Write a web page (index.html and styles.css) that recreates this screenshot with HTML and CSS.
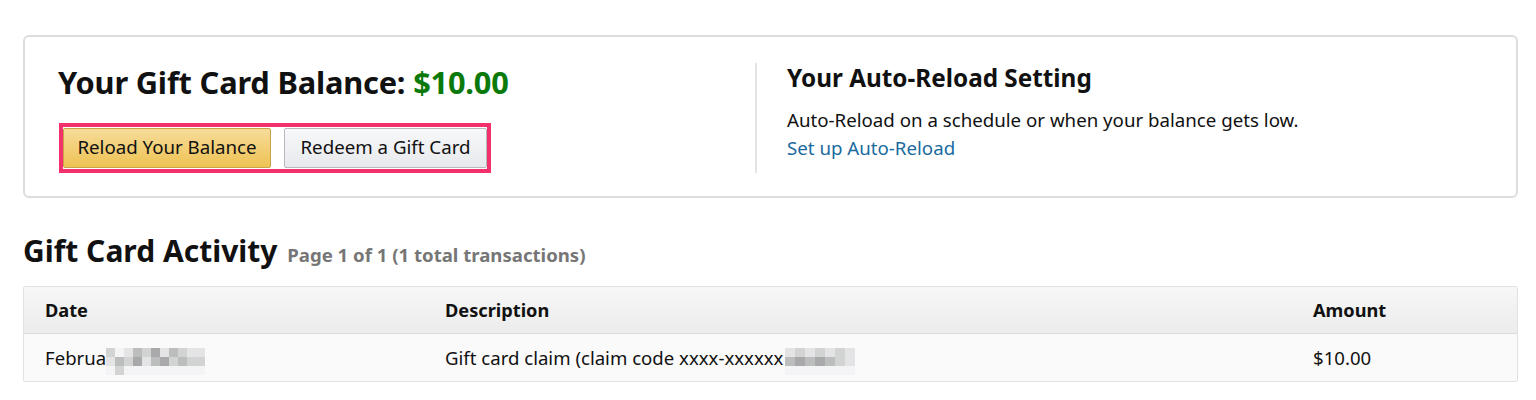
FILE: index.html
```html
<!DOCTYPE html>
<html>
<head>
<meta charset="utf-8">
<link rel="stylesheet" href="styles.css">
</head>
<body>
<div class="page">
  <section class="card">
    <div class="balance">
      <h1 class="balance-title">Your Gift Card Balance: <span class="amount">$10.00</span></h1>
      <div class="btn-frame">
        <button class="btn btn-primary">Reload Your Balance</button>
        <button class="btn btn-secondary">Redeem a Gift Card</button>
      </div>
    </div>
    <div class="divider"></div>
    <div class="auto">
      <h2 class="auto-title">Your Auto-Reload Setting</h2>
      <p class="auto-text">Auto-Reload on a schedule or when your balance gets low.</p>
      <a class="auto-link" href="#">Set up Auto-Reload</a>
    </div>
  </section>

  <h2 class="activity-title">Gift Card Activity <span class="activity-sub">Page 1 of 1 (1 total transactions)</span></h2>

  <div class="table">
    <div class="row head">
      <div class="c-date">Date</div>
      <div class="c-desc">Description</div>
      <div class="c-amt">Amount</div>
    </div>
    <div class="row body">
      <div class="c-date">Februa<span class="blur blur-date"><i class="p2"></i><i class="p1"></i><i class="p0"></i><i class="p0"></i><i class="p3"></i><i class="p2"></i><i class="p1"></i><i class="p2"></i><i class="p0"></i><i class="p3"></i><i class="p4"></i><i class="p0"></i><i class="p2"></i><i class="p1"></i><i class="p0"></i><i class="p4"></i><i class="p3"></i><i class="p0"></i><i class="p1"></i><i class="p4"></i><i class="p0"></i><i class="p3"></i><i class="p2"></i><i class="p0"></i><i class="p2"></i><i class="p3"></i><i class="p0"></i><i class="p1"></i><i class="p2"></i><i class="p0"></i><i class="p1"></i><i class="p2"></i><i class="p0"></i></span></div>
      <div class="c-desc">Gift card claim (claim code xxxx-xxxxxx<span class="blur blur-code"><i class="p1"></i><i class="p3"></i><i class="p0"></i><i class="p2"></i><i class="p4"></i><i class="p0"></i><i class="p1"></i><i class="p3"></i><i class="p0"></i><i class="p2"></i><i class="p4"></i><i class="p0"></i><i class="p1"></i><i class="p3"></i><i class="p0"></i><i class="p2"></i><i class="p2"></i><i class="p0"></i><i class="p1"></i><i class="p1"></i><i class="p0"></i></span></div>
      <div class="c-amt">$10.00</div>
    </div>
  </div>
</div>
</body>
</html>
```
FILE: styles.css
```css
* { box-sizing: border-box; }
html, body { margin: 0; padding: 0; background: #fff; }
body {
  font-family: "Noto Sans", "Open Sans", "Liberation Sans", sans-serif;
  color: #111;
}
.page {
  padding: 35px 18px 0 23px;
}
.card {
  display: flex;
  align-items: stretch;
  border: 2px solid #dddddd;
  border-radius: 6px;
  height: 163px;
  padding: 24px 33px 26px 33px;
}
.balance {
  width: 697px;
  display: flex;
  flex-direction: column;
}
.balance-title {
  margin: 0;
  font-size: 30.8px;
  font-weight: 700;
  line-height: 42px;
  letter-spacing: -0.2px;
  color: #111;
}
.amount { color: #0b7a0b; }
.btn-frame {
  margin-top: 20px;
  margin-left: 1px;
  display: flex;
  width: 432px;
  border: 4px solid #f2306b;
  background: #fff;
  height: 50px;
  padding: 1px 0 1px 0;
}
.btn {
  font-family: inherit;
  font-size: 18.7px;
  color: #111;
  height: 40px;
  padding: 0 0 3px;
  border-radius: 2px;
  cursor: pointer;
}
.btn-primary {
  width: 208px;
  background: linear-gradient(#f7dc9a, #eec253);
  border: 1px solid #c9a24a;
}
.btn-secondary {
  margin-left: 13px;
  width: 203px;
  background: linear-gradient(#f7f8fa, #e8e9ec);
  border: 1px solid #b8b9bc;
}
.divider {
  width: 2px;
  background: #e4e4e4;
  margin-top: 2px;
  margin-bottom: -3px;
}
.auto {
  padding-left: 30px;
  display: flex;
  flex-direction: column;
}
.auto-title {
  margin: 0;
  font-size: 24.3px;
  font-weight: 700;
  line-height: 34px;
  color: #111;
}
.auto-text {
  margin: 11px 0 0;
  font-size: 18.7px;
  line-height: 28px;
  color: #111;
}
.auto-link {
  font-size: 18.7px;
  line-height: 28px;
  color: #1a6aa0;
  text-decoration: none;
}
.activity-title {
  margin: 33px 0 0;
  font-size: 30px;
  font-weight: 700;
  line-height: 40px;
  color: #111;
}
.activity-sub {
  font-size: 18.6px;
  color: #767676;
  font-weight: 700;
  margin-left: 2px;
}
.table {
  margin-top: 11px;
  border: 1px solid #e2e2e2;
  border-radius: 2px;
}
.row {
  display: flex;
  align-items: center;
  font-size: 18.6px;
  padding-left: 21px;
}
.head {
  height: 47px;
  font-weight: 700;
  font-size: 18.2px;
  background: linear-gradient(#f7f7f7, #ececec);
  border-bottom: 1px solid #dcdcdc;
}
.body {
  height: 47px;
  background: #fafafa;
}
.c-date { width: 400px; display: flex; align-items: center; }
.c-desc { width: 868px; display: flex; align-items: center; }
.c-amt { flex: 1; }
.blur {
  display: inline-grid;
  grid-template-rows: 9px 9px 9px;
  grid-auto-flow: column;
  margin-top: 8px;
}
.blur-date { grid-template-columns: repeat(11, 9px); margin-left: 0; }
.blur-code { grid-template-columns: repeat(7, 10px); margin-left: 2px; }
.blur i { display: block; }
.p0 { background: #f4f4f6; }
.p1 { background: #e4e4e6; }
.p2 { background: #d2d3d3; }
.p3 { background: #bcbdbd; }
.p4 { background: #a9a9ab; }
```
